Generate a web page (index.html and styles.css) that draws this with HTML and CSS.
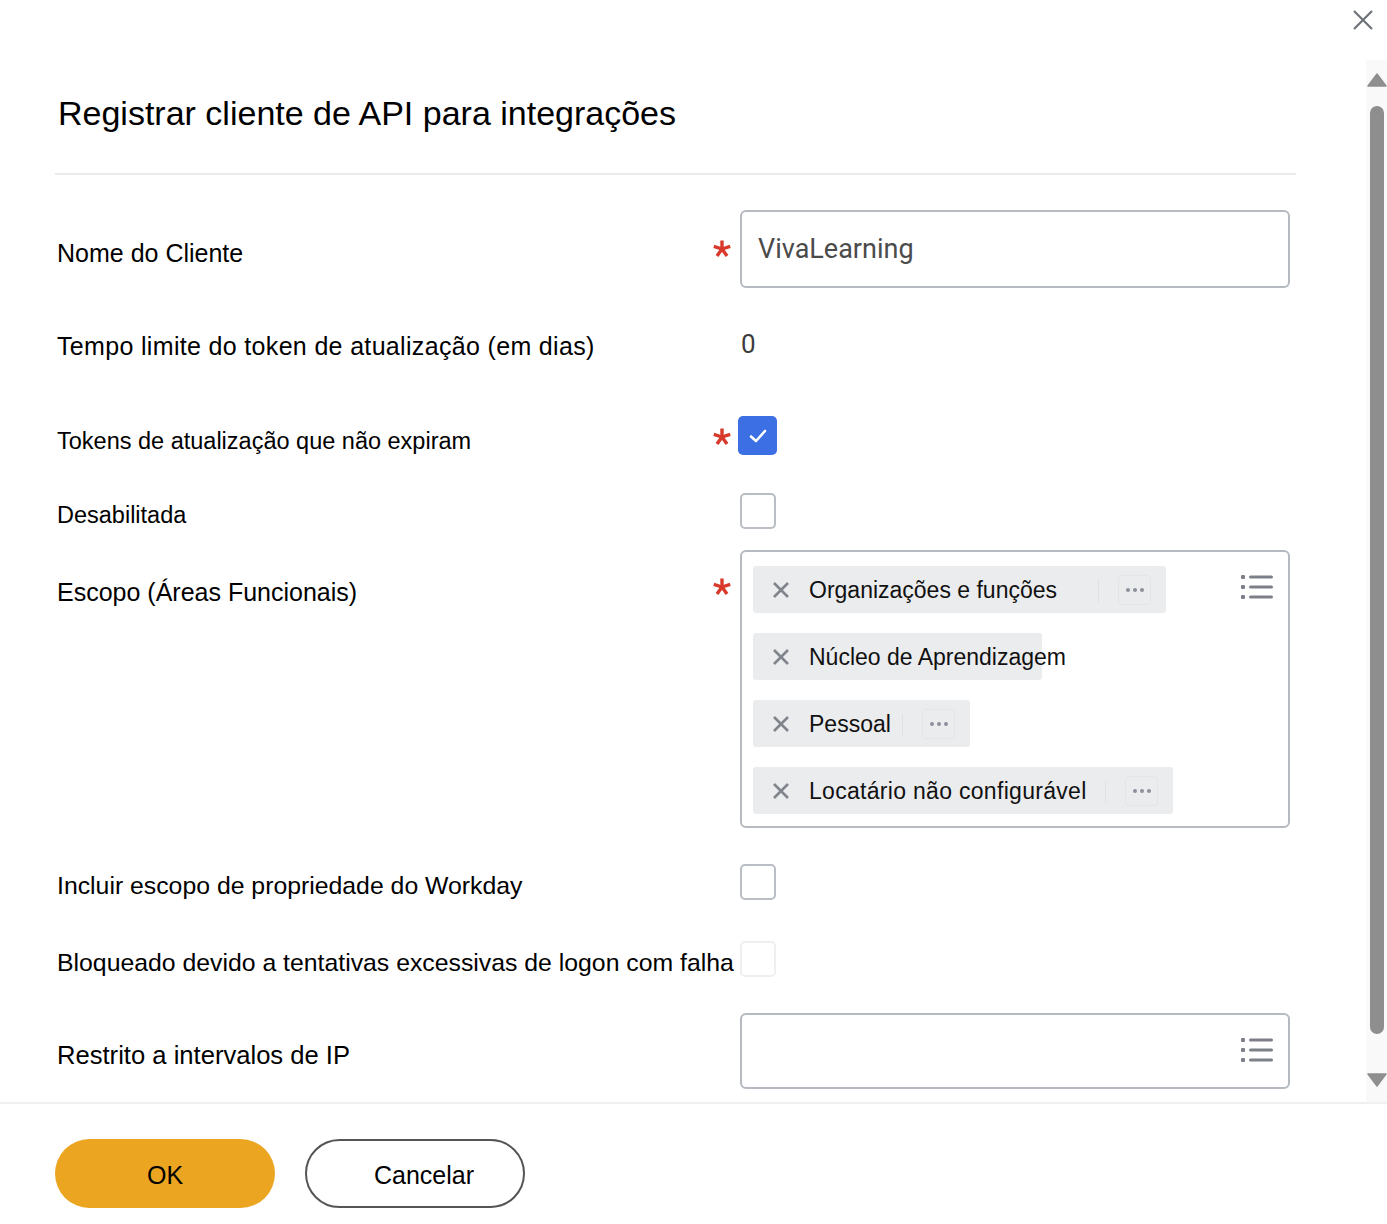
FILE: index.html
```html
<!DOCTYPE html>
<html lang="pt-BR">
<head>
<meta charset="utf-8">
<title>Registrar cliente de API para integrações</title>
<link rel="stylesheet" href="styles.css">
</head>
<body>
<div class="dialog">
  <button class="close" aria-label="Fechar">
    <svg width="22" height="22" viewBox="0 0 22 22"><path d="M2 2 L20 20 M20 2 L2 20" stroke="#6e737a" stroke-width="2.2" fill="none"/></svg>
  </button>
  <div class="scroll-area">
    <div class="content">
      <h1 class="title">Registrar cliente de API para integrações</h1>
      <div class="divider"></div>
      <div class="form">
        <div class="row row-name">
          <div class="label label-a">Nome do Cliente</div>
          <div class="req"><svg class="star" width="18" height="18" viewBox="0 0 18 18"><g stroke="#d8392b" stroke-width="3.4"><path d="M9 9 L9 0.5"/><path d="M9 9 L17.2 6.4"/><path d="M9 9 L0.8 6.4"/><path d="M9 9 L14 16"/><path d="M9 9 L4 16"/></g></svg></div>
          <div class="control"><div class="text-input">VivaLearning</div></div>
        </div>
        <div class="row row-timeout">
          <div class="label label-a label-wide">Tempo limite do token de atualização (em dias)</div>
          <div class="req"></div>
          <div class="control"><div class="value">0</div></div>
        </div>
        <div class="row row-check">
          <div class="label label-b">Tokens de atualização que não expiram</div>
          <div class="req"><svg class="star" width="18" height="18" viewBox="0 0 18 18"><g stroke="#d8392b" stroke-width="3.4"><path d="M9 9 L9 0.5"/><path d="M9 9 L17.2 6.4"/><path d="M9 9 L0.8 6.4"/><path d="M9 9 L14 16"/><path d="M9 9 L4 16"/></g></svg></div>
          <div class="control"><div class="checkbox checked"><svg width="22" height="22" viewBox="0 0 22 22"><path d="M4 11.5 L9 16 L18 6" stroke="#fff" stroke-width="2.6" fill="none" stroke-linecap="round" stroke-linejoin="round"/></svg></div></div>
        </div>
        <div class="row row-check">
          <div class="label label-b">Desabilitada</div>
          <div class="req"></div>
          <div class="control"><div class="checkbox"></div></div>
        </div>
        <div class="row row-scope">
          <div class="label label-a label-top">Escopo (Áreas Funcionais)</div>
          <div class="req req-top"><svg class="star" width="18" height="18" viewBox="0 0 18 18"><g stroke="#d8392b" stroke-width="3.4"><path d="M9 9 L9 0.5"/><path d="M9 9 L17.2 6.4"/><path d="M9 9 L0.8 6.4"/><path d="M9 9 L14 16"/><path d="M9 9 L4 16"/></g></svg></div>
          <div class="control">
            <div class="multi">
              <div class="tags">
                <div class="tag" style="width:413px">
                  <svg class="tag-x" width="18" height="18" viewBox="0 0 18 18"><path d="M2 2 L16 16 M16 2 L2 16" stroke="#80848b" stroke-width="2.6" fill="none"/></svg>
                  <span class="tag-text">Organizações e funções</span>
                  <span class="tag-sep"></span>
                  <span class="tag-more"><i></i><i></i><i></i></span>
                </div>
                <div class="tag" style="width:289px">
                  <svg class="tag-x" width="18" height="18" viewBox="0 0 18 18"><path d="M2 2 L16 16 M16 2 L2 16" stroke="#80848b" stroke-width="2.6" fill="none"/></svg>
                  <span class="tag-text">Núcleo de Aprendizagem</span>
                </div>
                <div class="tag" style="width:217px">
                  <svg class="tag-x" width="18" height="18" viewBox="0 0 18 18"><path d="M2 2 L16 16 M16 2 L2 16" stroke="#80848b" stroke-width="2.6" fill="none"/></svg>
                  <span class="tag-text">Pessoal</span>
                  <span class="tag-sep"></span>
                  <span class="tag-more"><i></i><i></i><i></i></span>
                </div>
                <div class="tag" style="width:420px">
                  <svg class="tag-x" width="18" height="18" viewBox="0 0 18 18"><path d="M2 2 L16 16 M16 2 L2 16" stroke="#80848b" stroke-width="2.6" fill="none"/></svg>
                  <span class="tag-text tag-text-wide">Locatário não configurável</span>
                  <span class="tag-sep"></span>
                  <span class="tag-more"><i></i><i></i><i></i></span>
                </div>
              </div>
              <svg class="list-icon" width="32" height="24" viewBox="0 0 32 24"><g fill="#7d8088"><rect x="0" y="0" width="4" height="4" rx="1"/><rect x="8" y="0.5" width="24" height="3" rx="1.5"/><rect x="0" y="10" width="4" height="4" rx="1"/><rect x="8" y="10.5" width="24" height="3" rx="1.5"/><rect x="0" y="20" width="4" height="4" rx="1"/><rect x="8" y="20.5" width="24" height="3" rx="1.5"/></g></svg>
            </div>
          </div>
        </div>
        <div class="row row-include">
          <div class="label label-c">Incluir escopo de propriedade do Workday</div>
          <div class="req"></div>
          <div class="control"><div class="checkbox"></div></div>
        </div>
        <div class="row row-locked">
          <div class="label label-c">Bloqueado devido a tentativas excessivas de logon com falha</div>
          <div class="req"></div>
          <div class="control"><div class="checkbox faint"></div></div>
        </div>
        <div class="row row-ip">
          <div class="label label-d">Restrito a intervalos de IP</div>
          <div class="req"></div>
          <div class="control">
            <div class="multi multi-empty">
              <div class="tags"></div>
              <svg class="list-icon" width="32" height="24" viewBox="0 0 32 24"><g fill="#7d8088"><rect x="0" y="0" width="4" height="4" rx="1"/><rect x="8" y="0.5" width="24" height="3" rx="1.5"/><rect x="0" y="10" width="4" height="4" rx="1"/><rect x="8" y="10.5" width="24" height="3" rx="1.5"/><rect x="0" y="20" width="4" height="4" rx="1"/><rect x="8" y="20.5" width="24" height="3" rx="1.5"/></g></svg>
            </div>
          </div>
        </div>
      </div>
    </div>
    <div class="scrollbar">
      <svg width="20" height="14" viewBox="0 0 20 14"><path d="M10 1 L19 13 L1 13 Z" fill="#8f8f8f" stroke="#8f8f8f" stroke-width="1.5" stroke-linejoin="round"/></svg>
      <div class="thumb"></div>
      <svg width="20" height="14" viewBox="0 0 20 14"><path d="M1 1 L19 1 L10 13 Z" fill="#8f8f8f" stroke="#8f8f8f" stroke-width="1.5" stroke-linejoin="round"/></svg>
    </div>
  </div>
  <div class="footer">
    <button class="btn btn-ok">OK</button>
    <button class="btn btn-cancel">Cancelar</button>
  </div>
</div>
</body>
</html>
```
FILE: styles.css
```css
* { box-sizing: border-box; }

body {
  margin: 0;
  background: #fff;
  color: #000;
  font-family: "Liberation Sans", Arial, sans-serif;
}

.dialog {
  position: relative;
  width: 1387px;
  height: 1224px;
  overflow: hidden;
}

.close {
  position: absolute;
  top: 9px;
  right: 13px;
  width: 22px;
  height: 22px;
  padding: 0;
  border: 0;
  background: none;
}

.scroll-area {
  display: flex;
  height: 1102px;
}

.content {
  flex: 1;
  padding: 0 70px 0 55px;
}

.title {
  margin: 93px 0 0 3px;
  font-size: 34px;
  line-height: 40px;
  font-weight: normal;
  white-space: nowrap;
}

.divider {
  margin-top: 40px;
  height: 2px;
  background: #ebebee;
}

.form {
  padding-top: 35px;
}

.row {
  display: flex;
  align-items: center;
}

.label {
  width: 652px;
  padding-left: 2px;
  padding-top: 7px;
  white-space: nowrap;
  line-height: 30px;
}

.label-a { font-size: 25px; }
.label-wide { letter-spacing: 0.33px; padding-top: 3px; }
.label-b { font-size: 23.5px; }
.label-c { font-size: 24.8px; }
.label-d { font-size: 25.6px; }

.label-top {
  align-self: flex-start;
  padding-top: 27px;
}

.req {
  width: 33px;
  display: flex;
  justify-content: center;
  padding-right: 3px;
}

.req-top {
  align-self: flex-start;
  padding-top: 28px;
}

.control {
  width: 550px;
}

.row-name { height: 78px; }
.row-timeout { height: 112px; }
.row-check { height: 74px; }
.row-check .checkbox.checked { margin-top: -3px; }
.row-scope { margin-top: 2px; align-items: flex-start; }
.row-include { height: 108px; }
.row-locked { height: 46px; }
.row-ip { margin-top: 31px; height: 76px; }

.text-input {
  height: 78px;
  border: 2px solid #b5b9c0;
  border-radius: 6px;
  padding-left: 16px;
  display: flex;
  align-items: center;
  font-family: Roboto, "Liberation Sans", sans-serif;
  font-size: 27px;
  color: #4b4b4b;
}

.value {
  font-family: Roboto, "Liberation Sans", sans-serif;
  font-size: 26px;
  color: #3c3c3c;
  padding-left: 1px;
}

.checkbox {
  width: 36px;
  height: 36px;
  border: 2px solid #b9bdc4;
  border-radius: 5px;
  background: #fff;
}

.checkbox.checked {
  width: 39px;
  height: 39px;
  margin-left: -2px;
  border: 0;
  background: #3b6fe3;
  display: flex;
  align-items: center;
  justify-content: center;
}

.checkbox.faint {
  border-color: #efeff1;
}

.multi {
  display: flex;
  align-items: flex-start;
  border: 2px solid #b5b9c0;
  border-radius: 6px;
  padding: 14px 15px 12px 11px;
}

.multi-empty {
  height: 76px;
}

.tags {
  flex: 1;
  display: flex;
  flex-direction: column;
  align-items: flex-start;
  gap: 20px;
}

.list-icon {
  margin-top: 9px;
  flex: none;
}

.tag {
  display: flex;
  align-items: center;
  height: 47px;
  padding-left: 19px;
  padding-top: 2px;
  background: #ebecee;
  border-radius: 3px;
}

.tag-x {
  flex: none;
  margin-right: 19px;
  margin-top: -2px;
}

.tag-text {
  font-size: 23px;
  white-space: nowrap;
  color: #111;
}

.tag-text-wide {
  letter-spacing: 0.3px;
}

.tag-sep {
  margin-left: auto;
  width: 1px;
  height: 22px;
  background: #dfe0e3;
}

.tag-more {
  flex: none;
  width: 33px;
  height: 30px;
  margin: -2px 15px 0 19px;
  border: 1px solid #e4e5e8;
  border-radius: 4px;
  display: flex;
  align-items: center;
  justify-content: center;
  gap: 3px;
}

.tag-more i {
  width: 4px;
  height: 4px;
  border-radius: 50%;
  background: #8c9099;
}

.scrollbar {
  width: 21px;
  margin-top: 60px;
  padding: 13px 0 15px;
  background: #f9f9f9;
  display: flex;
  flex-direction: column;
  align-items: center;
}

.thumb {
  flex: 1;
  width: 14px;
  margin: 19px 0 39px;
  border-radius: 7px;
  background: #8e8e8e;
}

.footer {
  display: flex;
  gap: 30px;
  padding: 35px 0 0 55px;
  border-top: 2px solid #f0f0f2;
}

.btn {
  width: 220px;
  height: 69px;
  border-radius: 35px;
  padding-top: 4px;
  font-family: "Liberation Sans", Arial, sans-serif;
  font-size: 25px;
  color: #000;
}

.btn-ok {
  border: 0;
  background: #eba520;
}

.btn-cancel {
  border: 2px solid #555;
  background: #fff;
  padding-left: 24px;
}
```
